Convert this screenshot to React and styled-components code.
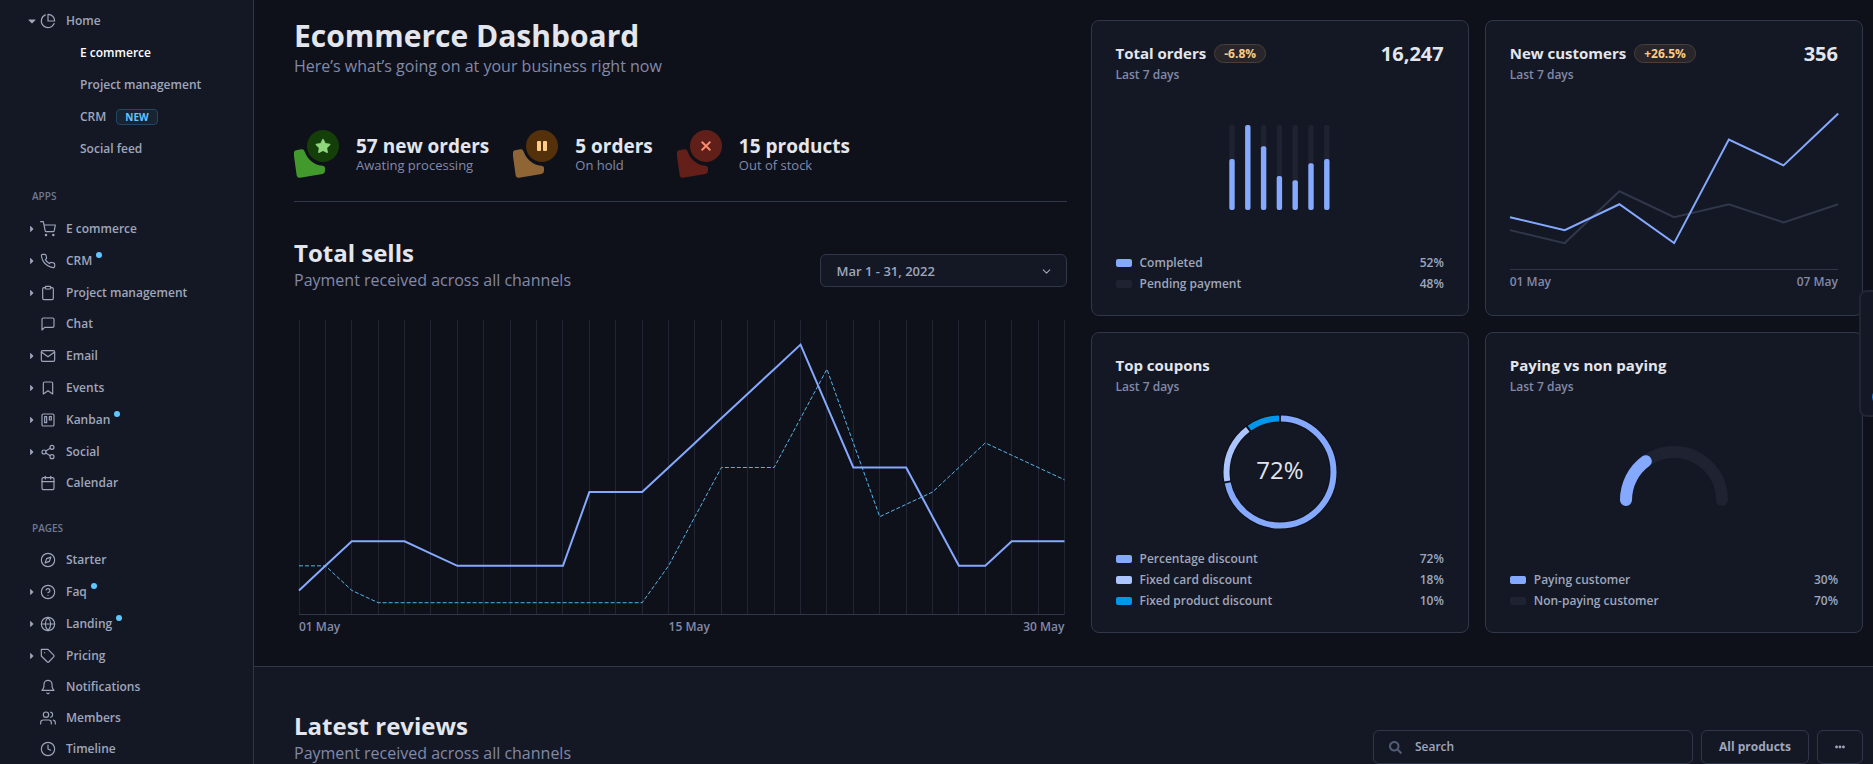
import React from "react";
import styled, { createGlobalStyle, css } from "styled-components";
import {
  FiPieChart, FiShoppingCart, FiPhone, FiClipboard, FiMessageSquare, FiMail, FiBookmark, FiTrello,
  FiShare2, FiCalendar, FiCompass, FiHelpCircle, FiGlobe, FiTag, FiBell, FiUsers, FiClock, FiChevronDown,
} from "react-icons/fi";
import { FaSearch, FaCaretDown, FaCaretRight, FaEllipsisH } from "react-icons/fa";

const color = {
  body: "#0f111a",
  panel: "#141824",
  track: "#1e2231",
  border: "#31374a",
  grid: "#222634",
  heading: "#e3e6ed",
  text: "#9fa6bc",
  muted: "#8289a9",
  label: "#6e7891",
  primary: "#85a9ff",
  primaryLight: "#adc5ff",
  info: "#60c6ff",
  infoDark: "#0097eb",
};

const Global = createGlobalStyle`
  *, *::before, *::after { box-sizing: border-box; }
  body {
    margin: 0;
    background: ${color.body};
    color: ${color.text};
    font-family: "Open Sans", "Noto Sans", sans-serif;
    font-size: 12px;
    line-height: 20px;
  }
  h1, h2, h3, h4, p, ul { margin: 0; padding: 0; }
  ul { list-style: none; }
  button, input, select { font: inherit; color: inherit; }
`;

/* ---------- Shell ---------- */

const Shell = styled.div`
  display: flex;
  height: 100vh;
  overflow: hidden;
`;

const scrollPane = css`
  overflow-y: auto;
  scrollbar-width: none;
`;

const Sidebar = styled.nav`
  ${scrollPane}
  flex: 0 0 254px;
  padding: 5px 16px 0 24px;
  background: ${color.panel};
  border-right: 1px solid ${color.border};
`;

const Main = styled.main`
  ${scrollPane}
  flex: 1;
  min-width: 0;
`;

/* ---------- Sidebar ---------- */

const NavLink = styled.a`
  display: flex;
  align-items: center;
  height: ${(p) => (p.$branch ? 32 : 31)}px;
  padding-bottom: ${(p) => (p.$branch ? 0 : 2)}px;
  color: ${color.text};
  font-weight: 600;
  text-decoration: none;
`;

const Caret = styled.span`
  display: flex;
  justify-content: center;
  width: 16px;
  svg { display: block; }
`;

const NavIcon = styled.span`
  display: flex;
  margin-right: 10px;
  svg { width: 16px; height: 16px; stroke-width: 1.75px; }
`;

const Dot = styled.span`
  width: 6px;
  height: 6px;
  margin: 0 0 12px 4px;
  border-radius: 50%;
  background: ${color.info};
`;

const SubList = styled.ul`
  padding-bottom: 2px;
`;

const SubLink = styled.a`
  display: flex;
  align-items: center;
  height: 32px;
  padding-left: 56px;
  color: ${(p) => (p.$active ? "#ffffff" : color.text)};
  font-weight: 600;
  text-decoration: none;
`;

const NewBadge = styled.span`
  margin-left: 10px;
  padding: 0 8px;
  border: 1px solid #22475f;
  border-radius: 4px;
  background: #182433;
  color: ${color.info};
  font-size: 10px;
  font-weight: 700;
  line-height: 14px;
`;

const NavLabel = styled.h4`
  margin: 21px 0 9px 8px;
  color: ${color.label};
  font-size: 10px;
  font-weight: 600;
  line-height: 16px;
  text-transform: uppercase;
`;

function NavItem({ icon: Icon, label, branch, open, dot }) {
  return (
    <li>
      <NavLink href="#" $branch={branch}>
        <Caret>{branch && (open ? <FaCaretDown size={12} /> : <FaCaretRight size={10} />)}</Caret>
        <NavIcon><Icon /></NavIcon>
        {label}
        {dot && <Dot />}
      </NavLink>
    </li>
  );
}

const apps = [
  { icon: FiShoppingCart, label: "E commerce", branch: true },
  { icon: FiPhone, label: "CRM", branch: true, dot: true },
  { icon: FiClipboard, label: "Project management", branch: true },
  { icon: FiMessageSquare, label: "Chat" },
  { icon: FiMail, label: "Email", branch: true },
  { icon: FiBookmark, label: "Events", branch: true },
  { icon: FiTrello, label: "Kanban", branch: true, dot: true },
  { icon: FiShare2, label: "Social", branch: true },
  { icon: FiCalendar, label: "Calendar" },
];

const pages = [
  { icon: FiCompass, label: "Starter" },
  { icon: FiHelpCircle, label: "Faq", branch: true, dot: true },
  { icon: FiGlobe, label: "Landing", branch: true, dot: true },
  { icon: FiTag, label: "Pricing", branch: true },
  { icon: FiBell, label: "Notifications" },
  { icon: FiUsers, label: "Members" },
  { icon: FiClock, label: "Timeline" },
];

/* ---------- Overview ---------- */

const Overview = styled.section`
  display: grid;
  grid-template-columns: 1fr 1fr;
  gap: 24px;
  padding: 20px 10px 31px 40px;
`;

const Column = styled.div`
  display: flex;
  flex-direction: column;
  min-width: 0;
`;

const PageTitle = styled.h1`
  color: ${color.heading};
  font-size: 30px;
  font-weight: 700;
  line-height: 32px;
`;

const SectionTitle = styled.h2`
  color: ${color.heading};
  font-size: 24px;
  font-weight: 700;
  line-height: 26px;
`;

const Subtitle = styled.p`
  margin-top: 2px;
  color: ${color.muted};
  font-size: 16px;
  line-height: 24px;
`;

const Stats = styled.ul`
  display: flex;
  gap: 24px;
  margin-top: 52px;
  padding-bottom: 23px;
  border-bottom: 1px solid ${color.border};
`;

const Stat = styled.li`
  display: flex;
  align-items: center;
  gap: 16px;
  svg { display: block; flex: none; }
`;

const StatValue = styled.h3`
  color: ${color.heading};
  font-size: 19px;
  font-weight: 700;
  line-height: 22px;
`;

const StatNote = styled.p`
  color: ${color.muted};
  font-size: 13px;
  line-height: 16px;
`;

function StatIcon({ sheet, disc, children }) {
  return (
    <svg width="46" height="48" viewBox="0 0 46 48" aria-hidden="true">
      <path
        d="M2.2 20.3 L7.5 19.3 Q9.7 18.9 10.4 21 C13.5 29.5 19 34.5 28.5 35.8 Q31.6 36.2 31 38.8 V41 Q30.8 43.4 28.5 43.9 L6 47.8 Q3.2 48.1 2.7 45.6 L-0.3 24 Q-0.5 20.9 2.2 20.3 Z"
        fill={sheet}
      />
      <circle cx="29" cy="16" r="16" fill={disc} />
      {children}
    </svg>
  );
}

const SellsHeader = styled.div`
  display: flex;
  align-items: flex-end;
  justify-content: space-between;
  margin: 38px 0 28px;
`;

const SelectBox = styled.div`
  position: relative;
  width: 247px;
  margin-bottom: 5px;
  svg { position: absolute; top: 11px; right: 14px; pointer-events: none; }
`;

const Select = styled.select`
  display: block;
  width: 100%;
  height: 33px;
  padding: 0 32px 0 16px;
  border: 1px solid ${color.border};
  border-radius: 6px;
  background: ${color.panel};
  font-size: 13px;
  font-weight: 600;
  appearance: none;
`;

const SellsChart = styled.div`
  padding: 0 2px 0 5px;
  svg { display: block; width: 100%; height: 295px; overflow: visible; }
`;

const AxisLabels = styled.div`
  display: grid;
  grid-template-columns: 14fr 15fr auto;
  margin-top: 4px;
  color: ${color.muted};
  font-weight: 600;
  line-height: 16px;
`;

const LastLabel = styled.span`
  display: flex;
  justify-content: flex-end;
  width: 0;
  white-space: nowrap;
`;

const thisPeriod = [1, 2, 3, 3, 3, 2.5, 2, 2, 2, 2, 2, 5, 5, 5, 6, 7, 8, 9, 10, 11, 8.5, 6, 6, 6, 4, 2, 2, 3, 3, 3];
const lastPeriod = [2, 2, 1, 0.5, 0.5, 0.5, 0.5, 0.5, 0.5, 0.5, 0.5, 0.5, 0.5, 0.5, 2, 4, 6, 6, 6, 8, 10, 7, 4, 4.5, 5, 6, 7, 6.5, 6, 5.5];
const toPoints = (values) => values.map((v, i) => `${i * 10},${(12 - v) * 10}`).join(" ");

function TotalSells() {
  return (
    <SellsChart>
      <svg viewBox="0 0 290 120" preserveAspectRatio="none" role="img" aria-label="Total sells per day">
        <g stroke={color.grid} shapeRendering="crispEdges">
          {thisPeriod.map((_, i) => (
            <line key={i} x1={i * 10} x2={i * 10} y1="0" y2="120" vectorEffect="non-scaling-stroke" />
          ))}
        </g>
        <line x1="0" x2="290" y1="120" y2="120" stroke={color.border} shapeRendering="crispEdges" vectorEffect="non-scaling-stroke" />
        <polyline points={toPoints(lastPeriod)} fill="none" stroke={color.info} strokeOpacity="0.9" strokeDasharray="4 2" vectorEffect="non-scaling-stroke" />
        <polyline points={toPoints(thisPeriod)} fill="none" stroke={color.primary} strokeWidth="2" vectorEffect="non-scaling-stroke" />
      </svg>
      <AxisLabels>
        <span>01 May</span>
        <span>15 May</span>
        <LastLabel>30 May</LastLabel>
      </AxisLabels>
    </SellsChart>
  );
}

/* ---------- Cards ---------- */

const Cards = styled.div`
  display: grid;
  grid-template-columns: 1fr 1fr;
  grid-template-rows: 296px 301px;
  gap: 16px;
  min-width: 0;
`;

const Card = styled.article`
  display: flex;
  flex-direction: column;
  padding: 22px 24px 21px;
  border: 1px solid ${color.border};
  border-radius: 8px;
  background: ${color.panel};
`;

const CardHeader = styled.header`
  display: flex;
  justify-content: space-between;
`;

const CardTitle = styled.h3`
  display: flex;
  align-items: center;
  gap: 8px;
  color: ${color.heading};
  font-size: 15px;
  font-weight: 700;
  line-height: 20px;
`;

const CardNote = styled.p`
  margin-top: 2px;
  color: ${color.muted};
  font-weight: 600;
`;

const Badge = styled.span`
  padding: 0 9px;
  border: 1px solid #4a3e38;
  border-radius: 10px;
  background: #28262a;
  color: #ffcc85;
  font-size: 12px;
  font-weight: 700;
  line-height: 17px;
`;

const CardTotal = styled.strong`
  color: ${color.heading};
  font-size: 20px;
  font-weight: 700;
  line-height: 22px;
`;

const Figure = styled.div`
  display: grid;
  flex: 1;
  place-items: center;
  min-height: 0;
  padding-bottom: 3px;
  svg { display: block; }
`;

const Legend = styled.ul`
  display: grid;
  gap: 1px;
`;

const LegendRow = styled.li`
  display: flex;
  align-items: center;
  font-weight: 600;
`;

const Swatch = styled.span`
  width: 16px;
  height: 8px;
  margin-right: 8px;
  border-radius: 2px;
  background: ${(p) => p.$fill};
`;

const LegendValue = styled.span`
  margin-left: auto;
`;

function LegendList({ items }) {
  return (
    <Legend>
      {items.map(([label, value, fill]) => (
        <LegendRow key={label}>
          <Swatch $fill={fill} />
          {label}
          <LegendValue>{value}</LegendValue>
        </LegendRow>
      ))}
    </Legend>
  );
}

function CardHead({ title, badge, total }) {
  return (
    <CardHeader>
      <div>
        <CardTitle>
          {title}
          {badge && <Badge>{badge}</Badge>}
        </CardTitle>
        <CardNote>Last 7 days</CardNote>
      </div>
      {total && <CardTotal>{total}</CardTotal>}
    </CardHeader>
  );
}

const orderBars = [60, 100, 75, 40, 35, 55, 60];

function OrdersChart() {
  return (
    <svg width="101" height="85" viewBox="0 0 101 85" role="img" aria-label="Orders per day">
      {orderBars.map((v, i) => {
        const x = i * 15.8 + 0.3;
        const h = v * 0.85;
        return (
          <g key={i}>
            <rect x={x} y="0" width="5.4" height="85" rx="2" fill={color.track} />
            <rect x={x} y={85 - h} width="5.4" height={h} rx="2" fill={color.primary} />
          </g>
        );
      })}
    </svg>
  );
}

const LineFigure = styled.div`
  display: flex;
  flex: 1;
  flex-direction: column;
  justify-content: flex-end;
  padding-bottom: 2px;
  svg { display: block; width: 100%; height: 158px; overflow: visible; }
`;

const RangeLabels = styled.div`
  display: flex;
  justify-content: space-between;
  margin-top: 3px;
  color: ${color.muted};
  font-weight: 600;
`;

const newCustomers = [4, 3, 5, 2, 10, 8, 12];
const priorCustomers = [3, 2, 6, 4, 5, 3.6, 5];
const customerPoints = (values) => values.map((v, i) => `${i * 10},${122 - v * 10}`).join(" ");

function CustomersChart() {
  return (
    <LineFigure>
      <svg viewBox="0 0 60 122" preserveAspectRatio="none" role="img" aria-label="New customers per day">
        <line x1="0" x2="60" y1="122" y2="122" stroke={color.border} shapeRendering="crispEdges" vectorEffect="non-scaling-stroke" />
        <g fill="none" strokeWidth="2">
          <polyline points={customerPoints(priorCustomers)} stroke={color.border} vectorEffect="non-scaling-stroke" />
          <polyline points={customerPoints(newCustomers)} stroke={color.primary} vectorEffect="non-scaling-stroke" />
        </g>
      </svg>
      <RangeLabels>
        <span>01 May</span>
        <span>07 May</span>
      </RangeLabels>
    </LineFigure>
  );
}

const coupons = [
  { from: 0, to: 72, stroke: color.primary },
  { from: 72, to: 90, stroke: color.primaryLight },
  { from: 90, to: 100, stroke: color.infoDark },
];

function CouponsChart() {
  return (
    <svg width="116" height="116" viewBox="0 0 116 116" role="img" aria-label="Percentage discount 72%">
      <circle cx="58" cy="58" r="53.5" fill="none" stroke={color.body} strokeWidth="8" />
      <g transform="rotate(-90 58 58)" fill="none" strokeWidth="6">
        {coupons.map((c) => (
          <circle
            key={c.from}
            cx="58"
            cy="58"
            r="53.5"
            stroke={c.stroke}
            pathLength="100"
            strokeDasharray={`${c.to - c.from - 0.6} 100`}
            strokeDashoffset={-(c.from + 0.3)}
          />
        ))}
      </g>
      <text x="58" y="65" textAnchor="middle" fontSize="24" fontWeight="500" fill={color.heading}>72%</text>
    </svg>
  );
}

function PayingChart() {
  return (
    <svg width="108" height="72" viewBox="0 0 108 72" role="img" aria-label="Paying customers 30%">
      <g fill="none" strokeWidth="12" strokeLinecap="round">
        <path d="M6 54 A48 48 0 0 1 102 54" stroke={color.track} />
        <path d="M6 54 A48 48 0 0 1 25.8 15.2" stroke={color.primary} />
      </g>
    </svg>
  );
}

/* ---------- Reviews ---------- */

const Reviews = styled.section`
  display: flex;
  align-items: flex-end;
  justify-content: space-between;
  padding: 46px 10px 32px 40px;
  border-top: 1px solid ${color.border};
  background: ${color.panel};
`;

const Toolbar = styled.div`
  display: flex;
  gap: 8px;
  margin-bottom: 1px;
`;

const SearchBox = styled.label`
  display: flex;
  align-items: center;
  gap: 13px;
  width: 320px;
  height: 34px;
  padding: 0 15px;
  border: 1px solid ${color.border};
  border-radius: 6px;
  color: #525b75;
`;

const SearchInput = styled.input`
  flex: 1;
  min-width: 0;
  padding: 0;
  border: 0;
  outline: 0;
  background: none;
  color: ${color.text};
  font-weight: 600;
  &::placeholder { color: ${color.text}; opacity: 1; }
`;

const ToolButton = styled.button`
  display: flex;
  align-items: center;
  height: 34px;
  padding: 0 17px;
  border: 1px solid ${color.border};
  border-radius: 6px;
  background: ${color.panel};
  color: ${color.text};
  font-weight: 700;
`;

const Customizer = styled.button`
  position: fixed;
  top: 290px;
  right: -24px;
  display: flex;
  align-items: flex-end;
  width: 38px;
  height: 127px;
  padding: 0 0 10px 11px;
  border: 2px solid ${color.grid};
  border-radius: 8px;
  background: ${color.panel};
  svg { display: block; }
`;

export default function App() {
  return (
    <>
      <Global />
      <Shell>
        <Sidebar aria-label="Main">
          <ul><NavItem icon={FiPieChart} label="Home" branch open /></ul>
          <SubList>
            <li><SubLink href="#" $active>E commerce</SubLink></li>
            <li><SubLink href="#">Project management</SubLink></li>
            <li><SubLink href="#">CRM<NewBadge>NEW</NewBadge></SubLink></li>
            <li><SubLink href="#">Social feed</SubLink></li>
          </SubList>
          <NavLabel>Apps</NavLabel>
          <ul>{apps.map((item) => <NavItem key={item.label} {...item} />)}</ul>
          <NavLabel>Pages</NavLabel>
          <ul>{pages.map((item) => <NavItem key={item.label} {...item} />)}</ul>
        </Sidebar>

        <Main>
          <Overview>
            <Column>
              <PageTitle>Ecommerce Dashboard</PageTitle>
              <Subtitle>Here’s what’s going on at your business right now</Subtitle>

              <Stats>
                <Stat>
                  <StatIcon sheet="#429a2c" disc="#153f08">
                    <path d="M29 9.5 l2.1 4.2 4.6.7 -3.3 3.3 .8 4.6 -4.2-2.1 -4.2 2.1 .8-4.6 -3.3-3.3 4.6-.7z" fill="#90d67f" stroke="#90d67f" strokeWidth="1.4" strokeLinejoin="round" />
                  </StatIcon>
                  <div>
                    <StatValue>57 new orders</StatValue>
                    <StatNote>Awating processing</StatNote>
                  </div>
                </Stat>
                <Stat>
                  <StatIcon sheet="#8f6536" disc="#54300b">
                    <rect x="24" y="11" width="4" height="10" rx="1" fill="#ffcc85" />
                    <rect x="30" y="11" width="4" height="10" rx="1" fill="#ffcc85" />
                  </StatIcon>
                  <div>
                    <StatValue>5 orders</StatValue>
                    <StatNote>On hold</StatNote>
                  </div>
                </Stat>
                <Stat>
                  <StatIcon sheet="#641f18" disc="#601f18">
                    <path d="M25.2 12.2 l7.6 7.6 M32.8 12.2 l-7.6 7.6" stroke="#fa8a6e" strokeWidth="2" strokeLinecap="round" />
                  </StatIcon>
                  <div>
                    <StatValue>15 products</StatValue>
                    <StatNote>Out of stock</StatNote>
                  </div>
                </Stat>
              </Stats>

              <SellsHeader>
                <div>
                  <SectionTitle>Total sells</SectionTitle>
                  <Subtitle>Payment received across all channels</Subtitle>
                </div>
                <SelectBox>
                  <Select aria-label="Period">
                    <option>Mar 1 - 31, 2022</option>
                  </Select>
                  <FiChevronDown size={13} />
                </SelectBox>
              </SellsHeader>
              <TotalSells />
            </Column>

            <Cards>
              <Card>
                <CardHead title="Total orders" badge="-6.8%" total="16,247" />
                <Figure><OrdersChart /></Figure>
                <LegendList items={[["Completed", "52%", color.primary], ["Pending payment", "48%", color.track]]} />
              </Card>
              <Card>
                <CardHead title="New customers" badge="+26.5%" total="356" />
                <CustomersChart />
              </Card>
              <Card>
                <CardHead title="Top coupons" />
                <Figure><CouponsChart /></Figure>
                <LegendList
                  items={[
                    ["Percentage discount", "72%", color.primary],
                    ["Fixed card discount", "18%", color.primaryLight],
                    ["Fixed product discount", "10%", color.infoDark],
                  ]}
                />
              </Card>
              <Card>
                <CardHead title="Paying vs non paying" />
                <Figure><PayingChart /></Figure>
                <LegendList items={[["Paying customer", "30%", color.primary], ["Non-paying customer", "70%", color.track]]} />
              </Card>
            </Cards>
          </Overview>

          <Reviews>
            <div>
              <SectionTitle>Latest reviews</SectionTitle>
              <Subtitle>Payment received across all channels</Subtitle>
            </div>
            <Toolbar>
              <SearchBox>
                <FaSearch size={13} />
                <SearchInput type="search" placeholder="Search" aria-label="Search reviews" />
              </SearchBox>
              <ToolButton type="button">All products</ToolButton>
              <ToolButton type="button" aria-label="More"><FaEllipsisH size={10} /></ToolButton>
            </Toolbar>
          </Reviews>
        </Main>
      </Shell>
      <Customizer type="button" aria-label="Customize">
        <svg width="16" height="16" viewBox="0 0 16 16" aria-hidden="true">
          <circle cx="8" cy="8" r="6.5" fill="none" stroke="#1c7fe0" strokeWidth="3" />
        </svg>
      </Customizer>
    </>
  );
}
